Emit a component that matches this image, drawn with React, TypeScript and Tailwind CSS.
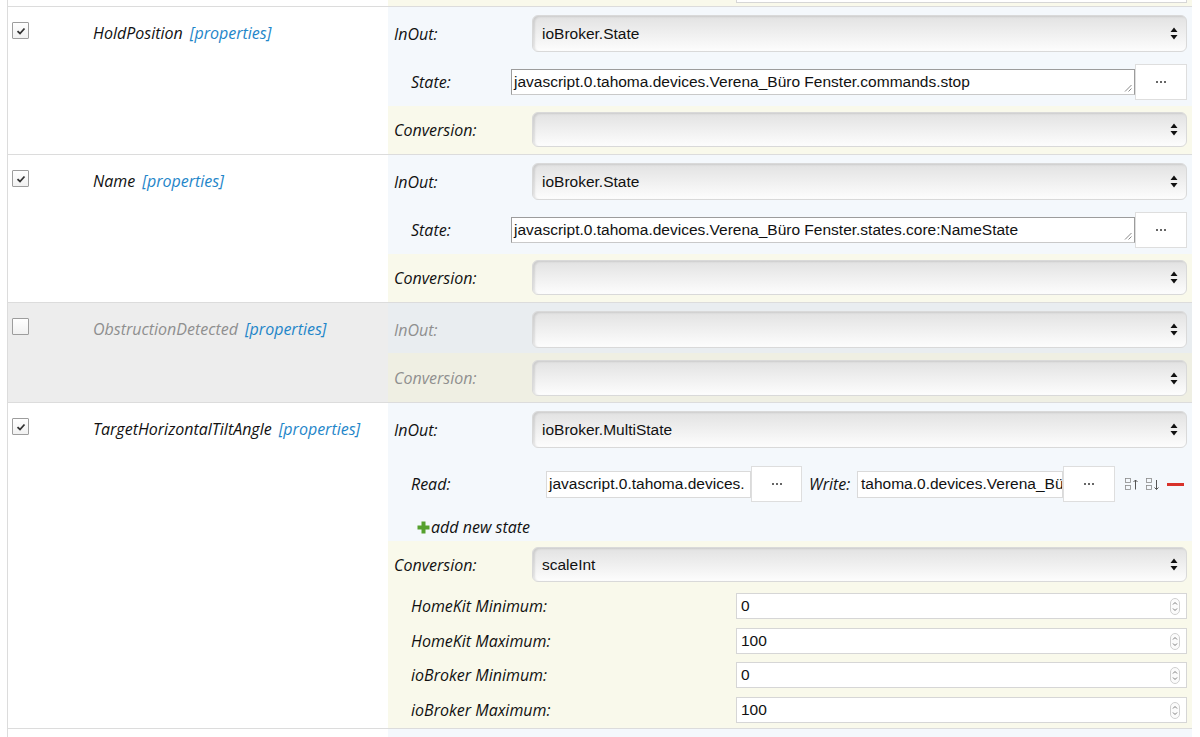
import type { ReactNode } from 'react'

const LABEL = "font-['Open_Sans',sans-serif] italic text-[16px] leading-5 text-[#111]"
const LABEL_OFF = "font-['Open_Sans',sans-serif] italic text-[16px] leading-5 text-[#8f8f8f]"
const INPUT_FONT = "font-['Liberation_Sans',Arial,sans-serif] text-[15.5px] text-[#111]"

const BLUE = 'bg-[#f4f8fc]'
const YELLOW = 'bg-[#f9f9eb]'

function Arrows() {
  return (
    <svg width="8" height="13" viewBox="0 0 8 13" className="shrink-0">
      <path d="M4 0.5L7.5 5H0.5Z M0.5 8H7.5L4 12.5Z" fill="#111" />
    </svg>
  )
}

function Select({ value, h = 'h-[37px]' }: { value?: string; h?: string }) {
  return (
    <div
      className={`${h} mr-[5px] flex flex-1 items-center justify-between rounded-[6px] border border-[#d9d9d9] bg-linear-to-b from-[#e2e2e2] to-[#fdfdfd] pr-[8px] pl-[9px] shadow-[inset_2px_1px_2px_rgba(0,0,0,0.10)] ${INPUT_FONT}`}
    >
      <span>{value ?? ''}</span>
      <Arrows />
    </div>
  )
}

function Dots({ w = 'w-[52px]', h = 'h-[36px]' }: { w?: string; h?: string }) {
  return (
    <div className={`${w} ${h} flex shrink-0 items-center justify-center gap-[2px] border border-[#dedede] bg-white`}>
      <span className="h-[2px] w-[2px] rounded-full bg-[#333]" />
      <span className="h-[2px] w-[2px] rounded-full bg-[#333]" />
      <span className="h-[2px] w-[2px] rounded-full bg-[#333]" />
    </div>
  )
}

function Grip() {
  return (
    <svg width="8" height="8" viewBox="0 0 8 8" className="absolute right-[2px] bottom-[2px]">
      <path d="M7.5 1L1 7.5M7.5 4.5L4.5 7.5" stroke="#888" strokeWidth="1" />
    </svg>
  )
}

function Textarea({ value }: { value: string }) {
  return (
    <div
      className={`relative flex h-[26px] w-[624px] items-center overflow-hidden border border-[#9c9c9c] border-b-[#c9c9c9] bg-white pl-[2px] whitespace-nowrap ${INPUT_FONT}`}
    >
      {value}
      <Grip />
    </div>
  )
}

function Spinner() {
  return (
    <svg width="10" height="17" viewBox="0 0 10 17" className="shrink-0">
      <rect x="0.5" y="0.5" width="9" height="16" rx="4.5" fill="#fbfbfb" stroke="#cfcfcf" />
      <path d="M3 6.5L5 4.5L7 6.5M3 10.5L5 12.5L7 10.5" stroke="#7a7a7a" fill="none" strokeWidth="1" />
    </svg>
  )
}

function NumberRow({ label, value, className = '' }: { label: string; value: string; className?: string }) {
  return (
    <div className={`flex h-[26px] items-center ${className}`}>
      <span className={`w-[348px] pl-[23px] ${LABEL}`}>{label}</span>
      <div
        className={`mr-[5px] flex h-[26px] flex-1 items-center justify-between border border-[#d6d6d6] bg-white pr-[6px] pl-[4px] ${INPUT_FONT}`}
      >
        <span>{value}</span>
        <Spinner />
      </div>
    </div>
  )
}

function Checkbox({ checked }: { checked: boolean }) {
  return (
    <div className="flex h-[17px] w-[17px] shrink-0 items-center justify-center rounded-[1px] border border-[#9d9d9d] bg-linear-to-b from-white to-[#f1f1f1]">
      {checked && (
        <svg width="10" height="8" viewBox="0 0 10 8">
          <path d="M1.5 4.2L4 6.5L8.5 1.5" stroke="#333" strokeWidth="1.8" fill="none" />
        </svg>
      )}
    </div>
  )
}

function LeftCell({ checked, name, off }: { checked: boolean; name: string; off?: boolean }) {
  return (
    <div className={`flex w-[380px] shrink-0 items-start pt-[15px] pl-[4px] ${off ? 'bg-[#ededed]' : 'bg-white'}`}>
      <Checkbox checked={checked} />
      <span className={`mt-px ml-[64px] ${off ? LABEL_OFF : LABEL}`}>
        {name}
        <span className="ml-[7px] text-[#1f86c9]">[properties]</span>
      </span>
    </div>
  )
}

function Row({ children, left }: { children: ReactNode; left: ReactNode }) {
  return (
    <div className="flex border-t border-[#dcdcdc]">
      {left}
      <div className="w-[804px]">{children}</div>
    </div>
  )
}

function SortIcon({ down }: { down?: boolean }) {
  return (
    <svg width="15" height="13" viewBox="0 0 15 13" className="shrink-0">
      <rect x="0.5" y="0.5" width="5" height="4" fill="none" stroke="#8a8a8a" strokeWidth="0.8" />
      <rect x="0.5" y="7.5" width="5" height="4" fill="none" stroke="#8a8a8a" strokeWidth="0.8" />
      {down ? (
        <path d="M10.5 2V11.5M8.5 9.5L10.5 11.5L12.5 9.5" stroke="#555" fill="none" strokeWidth="1" />
      ) : (
        <path d="M10.5 11.5V2M8.5 4L10.5 2L12.5 4" stroke="#555" fill="none" strokeWidth="1" />
      )}
    </svg>
  )
}

function PlusIcon() {
  return (
    <svg width="15" height="15" viewBox="0 0 15 15" className="shrink-0">
      <path d="M7.5 1.5V13.5M1.5 7.5H13.5" stroke="#55a02e" strokeWidth="4" />
    </svg>
  )
}

function SimpleStateRow({ name, state }: { name: string; state: string }) {
  return (
    <Row left={<LeftCell checked name={name} />}>
      <div className={`${BLUE} pt-2 pb-[6px]`}>
        <div className="flex h-[37px] items-center">
          <span className={`w-[144px] pl-[6px] ${LABEL}`}>InOut:</span>
          <Select value="ioBroker.State" />
        </div>
        <div className="mt-3 flex h-[36px] items-center">
          <span className={`w-[123px] pl-[23px] ${LABEL}`}>State:</span>
          <Textarea value={state} />
          <Dots />
        </div>
      </div>
      <div className={`${YELLOW} pt-[6px] pb-[7px]`}>
        <div className="flex h-[35px] items-center">
          <span className={`w-[144px] pl-[6px] ${LABEL}`}>Conversion:</span>
          <Select h="h-[35px]" />
        </div>
      </div>
    </Row>
  )
}

export default function App() {
  return (
    <div className="min-h-[737px] bg-white">
      <div className="ml-[7px] w-[1185px] border-l border-[#dcdcdc]">
        {/* tail of the previous row */}
        <div className="flex h-[6px]">
          <div className="w-[380px] bg-white" />
          <div className={`w-[804px] ${YELLOW} pr-[5px] pl-[348px]`}>
            <div className="h-[3px] border-x border-b border-[#d6d6d6] bg-white" />
          </div>
        </div>

        <SimpleStateRow
          name="HoldPosition"
          state="javascript.0.tahoma.devices.Verena_Büro Fenster.commands.stop"
        />
        <SimpleStateRow
          name="Name"
          state="javascript.0.tahoma.devices.Verena_Büro Fenster.states.core:NameState"
        />

        <Row left={<LeftCell checked={false} name="ObstructionDetected" off />}>
          <div className="bg-[#e9edf0] pt-2 pb-[5px]">
            <div className="flex h-[37px] items-center">
              <span className={`w-[144px] pl-[6px] ${LABEL_OFF}`}>InOut:</span>
              <Select />
            </div>
          </div>
          <div className="bg-[#efefe3] pt-[7px] pb-[6px]">
            <div className="flex h-[36px] items-center">
              <span className={`w-[144px] pl-[6px] ${LABEL_OFF}`}>Conversion:</span>
              <Select h="h-[36px]" />
            </div>
          </div>
        </Row>

        <Row left={<LeftCell checked name="TargetHorizontalTiltAngle" />}>
          <div className={`${BLUE} pt-2 pb-[4px]`}>
            <div className="flex h-[37px] items-center">
              <span className={`w-[144px] pl-[6px] ${LABEL}`}>InOut:</span>
              <Select value="ioBroker.MultiState" />
            </div>
            <div className="mt-[18px] flex h-[36px] items-center">
              <span className={`w-[158px] pl-[23px] ${LABEL}`}>Read:</span>
              <div
                className={`flex h-[27px] w-[205px] items-center overflow-hidden border border-[#dadada] bg-white pl-[2px] whitespace-nowrap ${INPUT_FONT}`}
              >
                javascript.0.tahoma.devices.
              </div>
              <Dots w="w-[51px]" />
              <span className={`ml-[7px] w-[48px] ${LABEL}`}>Write:</span>
              <div
                className={`flex h-[27px] w-[206px] items-center overflow-hidden border border-[#dadada] bg-white pl-[3px] whitespace-nowrap ${INPUT_FONT}`}
              >
                tahoma.0.devices.Verena_Bü
              </div>
              <Dots />
              <div className="ml-[10px] flex items-center gap-[6px]">
                <SortIcon />
                <SortIcon down />
                <div className="h-[3px] w-[17px] bg-[#d8322a]" />
              </div>
            </div>
            <div className="mt-[15px] flex h-5 items-center pl-[28px]">
              <PlusIcon />
              <span className={`${LABEL} text-[#1f86c9]`}>add new state</span>
            </div>
          </div>
          <div className={`${YELLOW} pt-[6px] pb-[5px]`}>
            <div className="flex h-[35px] items-center">
              <span className={`w-[144px] pl-[6px] ${LABEL}`}>Conversion:</span>
              <Select h="h-[35px]" value="scaleInt" />
            </div>
            <NumberRow className="mt-[11px]" label="HomeKit Minimum:" value="0" />
            <NumberRow className="mt-[9px]" label="HomeKit Maximum:" value="100" />
            <NumberRow className="mt-[8px]" label="ioBroker Minimum:" value="0" />
            <NumberRow className="mt-[9px]" label="ioBroker Maximum:" value="100" />
          </div>
        </Row>

        <Row left={<div className="w-[380px] bg-white" />}>
          <div className={`${BLUE} h-[12px]`} />
        </Row>
      </div>
    </div>
  )
}
